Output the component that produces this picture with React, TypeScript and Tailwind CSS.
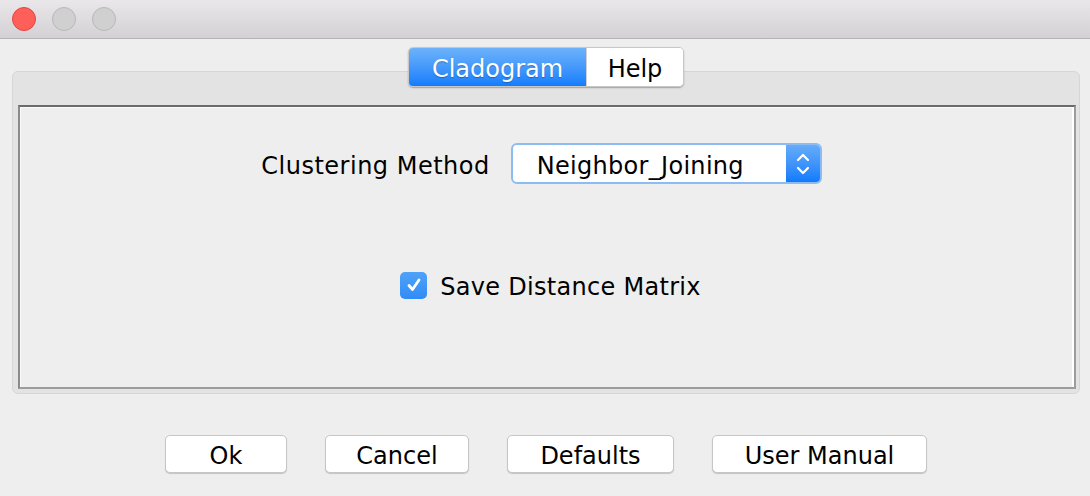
import React from "react";

const font = { fontFamily: '"DejaVu Sans", "Lucida Grande", Verdana, sans-serif' };

function Btn({ label, w }: { label: string; w: string }) {
  return (
    <div
      className={`${w} h-[38px] flex items-center justify-center rounded-[5px] bg-white border border-[#c6c6c6] shadow-[0_1px_1px_rgba(0,0,0,0.18)] text-[24px] text-black leading-none pt-[4px]`}
    >
      {label}
    </div>
  );
}

export default function App() {
  return (
    <div className="w-[1090px] h-[496px] bg-[#eeeeee] flex flex-col overflow-hidden" style={font}>
      {/* title bar */}
      <div className="h-[39px] shrink-0 bg-gradient-to-b from-[#e9e7e9] to-[#d3d1d3] border-b border-[#b4b4b4] flex items-center pl-[12px] gap-[16px]">
        <div className="w-[24px] h-[24px] rounded-full bg-[#fe5f58] border border-[#e2463f]" />
        <div className="w-[24px] h-[24px] rounded-full bg-[#d0d0d0] border border-[#b8b8b8]" />
        <div className="w-[24px] h-[24px] rounded-full bg-[#d0d0d0] border border-[#b8b8b8]" />
      </div>

      {/* tabs */}
      <div className="pl-[12px] pr-[10px] mt-[8px] flex flex-col">
        <div className="relative z-10 flex justify-center">
          <div className="flex h-[40px] rounded-[5px] shadow-[0_1px_1.5px_rgba(0,0,0,0.3)] border border-[#c8c8c8] overflow-hidden">
            <div className="w-[177px] flex items-center justify-center pt-[3px] bg-gradient-to-b from-[#6cb2fa] to-[#0f7dfc] text-white text-[24px] leading-none [text-shadow:0_1px_1px_rgba(0,0,0,0.25)]">
              Cladogram
            </div>
            <div className="w-[97px] flex items-center justify-center pt-[3px] bg-white text-black text-[24px] leading-none border-l border-[#d0d0d0]">
              Help
            </div>
          </div>
        </div>

        {/* outer panel */}
        <div className="-mt-[16px] h-[323px] rounded-[6px] bg-[#e3e3e3] border border-[#d6d6d6] pt-[33px] pl-[5px] pr-[3px] pb-[4px] flex">
          <div className="flex-1 border-t-2 border-l-2 border-t-[#6b6b6b] border-l-[#8a8a8a] border-b-2 border-r-2 border-b-[#9c9c9c] border-r-[#9c9c9c]">
            <div className="h-full bg-[#eeeeee] border-t border-l border-r-2 border-[#fafafa] border-r-white flex flex-col items-center">
              {/* clustering row */}
              <div className="mt-[35px] flex items-center pr-[10px]">
                <span className="text-[24px] text-black leading-none tracking-[0.5px] pt-[4px]">Clustering Method</span>
                <div className="ml-[21px] w-[311px] h-[41px] rounded-[6px] border-2 border-[#8dbcf5] bg-white flex overflow-hidden">
                  <div className="flex-1 flex items-center pl-[24px] pt-[4px] text-[24px] text-black leading-none tracking-[0.3px]">
                    Neighbor_Joining
                  </div>
                  <div className="w-[34px] bg-gradient-to-b from-[#64acfa] to-[#0d7bfb] flex items-center justify-center">
                    <svg width="16" height="26" viewBox="0 0 16 26" fill="none" stroke="white" strokeWidth="2.2" strokeLinecap="round" strokeLinejoin="round">
                      <path d="M3 9 L8 4 L13 9" />
                      <path d="M3 17 L8 22 L13 17" />
                    </svg>
                  </div>
                </div>
              </div>

              {/* checkbox row */}
              <div className="mt-[87px] flex items-center pl-[8px]">
                <div className="w-[27px] h-[27px] rounded-[5px] bg-gradient-to-b from-[#4fa2fa] to-[#2f8cf6] flex items-center justify-center">
                  <svg width="20" height="20" viewBox="0 0 20 20" fill="none" stroke="white" strokeWidth="2.8" strokeLinecap="round" strokeLinejoin="round">
                    <path d="M5 10.5 L8.5 14.5 L15 5" />
                  </svg>
                </div>
                <span className="ml-[13px] pt-[4px] text-[24px] text-black leading-none tracking-[0.3px]">Save Distance Matrix</span>
              </div>
            </div>
          </div>
        </div>
      </div>

      {/* buttons */}
      <div className="mt-[41px] flex justify-center gap-[38px] pl-[2px]">
        <Btn label="Ok" w="w-[122px]" />
        <Btn label="Cancel" w="w-[144px]" />
        <Btn label="Defaults" w="w-[167px]" />
        <Btn label="User Manual" w="w-[215px]" />
      </div>
    </div>
  );
}
